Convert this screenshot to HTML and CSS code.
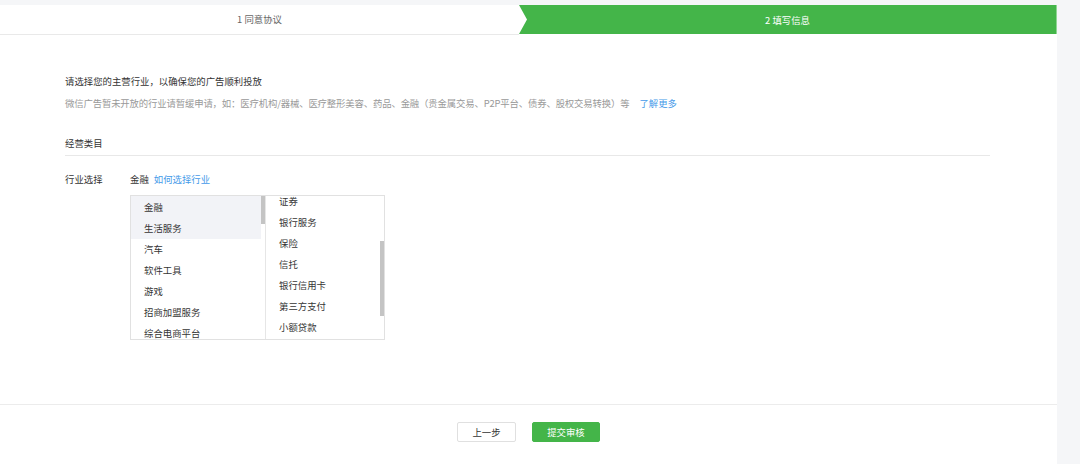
FILE: index.html
```html
<!DOCTYPE html>
<html lang="zh-CN">
<head>
<meta charset="utf-8">
<title>填写信息</title>
<link rel="stylesheet" href="styles.css">
</head>
<body>
<div class="page">
  <div class="steps">
    <div class="step step-done">1 同意协议</div>
    <div class="step step-active">2 填写信息</div>
  </div>
  <div class="content">
    <p class="title">请选择您的主营行业，以确保您的广告顺利投放</p>
    <p class="hint">微信广告暂未开放的行业请暂缓申请，如：医疗机构/器械、医疗整形美容、药品、金融（贵金属交易、P2P平台、债券、股权交易转换）等<a class="link more">了解更多</a></p>
    <div class="section-head">经营类目</div>
    <div class="row">
      <span class="label">行业选择</span>
      <span class="value">金融</span><a class="link">如何选择行业</a>
    </div>
    <div class="picker">
      <div class="col col-left">
        <ul class="items">
          <li class="sel">金融</li>
          <li class="sel">生活服务</li>
          <li>汽车</li>
          <li>软件工具</li>
          <li>游戏</li>
          <li>招商加盟服务</li>
          <li>综合电商平台</li>
        </ul>
        <div class="thumb thumb-left"></div>
      </div>
      <div class="col col-right">
        <ul class="items items-scrolled">
          <li>证券</li>
          <li>银行服务</li>
          <li>保险</li>
          <li>信托</li>
          <li>银行信用卡</li>
          <li>第三方支付</li>
          <li>小额贷款</li>
        </ul>
        <div class="thumb thumb-right"></div>
      </div>
    </div>
  </div>
  <div class="footer">
    <button class="btn btn-default">上一步</button>
    <button class="btn btn-primary">提交审核</button>
  </div>
</div>
</body>
</html>
```
FILE: styles.css
```css
* { box-sizing: border-box; }
html, body { margin: 0; padding: 0; }
body {
  background: #f5f6f8;
  padding-top: 5px;
  font-family: "Noto Sans CJK SC", "Noto Sans", sans-serif;
  font-size: 9.4px;
  color: #333;
  height: 464px;
  overflow: hidden;
}
.page {
  width: 1057px;
  height: 459px;
  background: #fff;
  display: flex;
  flex-direction: column;
}
.steps {
  display: flex;
  height: 30px;
}
.step {
  display: flex;
  align-items: center;
  justify-content: center;
  height: 29px;
  line-height: 16px;
}
.step-done {
  width: 519px;
  color: #666;
  border-bottom: 1px solid #e9e9e9;
  height: 30px;
  padding-bottom: 1px;
}
.step-active {
  flex: 1;
  background: #44b549;
  color: #fff;
  clip-path: polygon(0 0, 100% 0, 100% 100%, 0 100%, 8px 50%);
  border-right: 1px solid #8fd693;
}
.content {
  padding-left: 65px;
}
.title {
  margin: 38px 0 0;
  line-height: 16px;
  color: #333;
}
.hint {
  margin: 6px 0 0;
  line-height: 16px;
  color: #999;
  letter-spacing: -0.15px;
}
.link {
  color: #459ae9;
  text-decoration: none;
}
.more { margin-left: 10px; letter-spacing: 0; }
.section-head {
  margin-top: 24px;
  width: 925px;
  line-height: 16px;
  padding-bottom: 4px;
  border-bottom: 1px solid #e8e8e8;
  color: #333;
}
.row {
  margin-top: 15px;
  line-height: 16px;
  display: flex;
}
.label {
  width: 65px;
  color: #333;
}
.value {
  margin-right: 5px;
  color: #333;
}
.picker {
  margin: 8px 0 0 65px;
  width: 255px;
  height: 145px;
  border: 1px solid #e1e1e1;
  display: flex;
}
.col {
  position: relative;
  overflow: hidden;
  height: 143px;
}
.col-left { width: 134px; }
.col-right {
  flex: 1;
  border-left: 1px solid #e6e6e6;
}
.items {
  list-style: none;
  margin: 0;
  padding: 0;
}
.items li {
  height: 21px;
  line-height: 21px;
  padding-left: 13px;
  color: #353535;
  white-space: nowrap;
}
.col-left .items { padding-top: 1px; }
.col-left .items li { width: 130px; }
.items li.sel { background: #f2f3f7; }
.col-left .items li.sel:first-child { margin-top: -1px; height: 22px; line-height: 23px; }
.items-scrolled { margin-top: -5px; }
.thumb {
  position: absolute;
  right: 0;
  width: 4px;
  background: #c4c4c4;
}
.thumb-left { top: 0; height: 28px; }
.thumb-right { top: 45px; height: 75px; right: 0; }
.footer {
  margin-top: auto;
  height: 60px;
  border-top: 1px solid #ececec;
  padding-top: 17px;
  display: flex;
  justify-content: center;
  gap: 16px;
}
.btn {
  height: 20px;
  font-family: inherit;
  font-size: 9.4px;
  line-height: 18px;
  padding: 0;
  border-radius: 2px;
  cursor: pointer;
}
.btn-default {
  width: 59px;
  background: #fff;
  border: 1px solid #e0e0e0;
  color: #333;
}
.btn-primary {
  width: 68px;
  background: #44b549;
  border: 1px solid #44b549;
  color: #fff;
}
```
